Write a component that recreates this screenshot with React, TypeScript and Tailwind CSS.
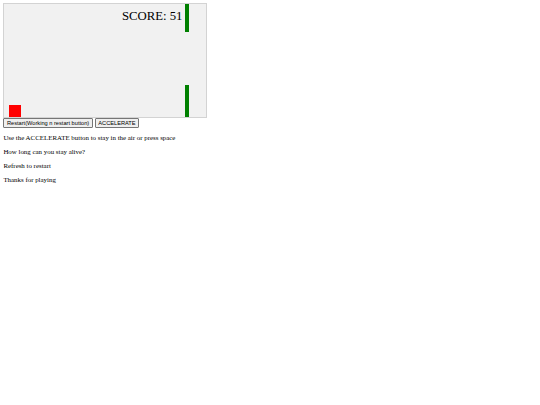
export default function App() {
  return (
    <div className="min-h-screen bg-white p-[3.4px] font-['Liberation_Serif',serif] text-[6.9px] leading-[1.1] text-black">
      <div className="relative h-[115px] w-[204px] border-[0.425px] border-[#d3d3d3] bg-[#f1f1f1]">
        <div className="absolute left-[117.5px] top-[6px] whitespace-nowrap text-[12.75px] leading-none">SCORE: 51</div>
        <div className="absolute left-[180.5px] top-0 h-[28px] w-[4.25px] bg-[#008000]" />
        <div className="absolute bottom-0 left-[180.5px] h-[32px] w-[4.25px] bg-[#008000]" />
        <div className="absolute bottom-0 left-[4.25px] h-[12.75px] w-[12.75px] bg-[#ff0000]" />
      </div>
      <div className="flex gap-[2px] font-['Liberation_Sans',Arial,sans-serif] text-[5.67px] leading-[1.15]">
        <button type="button" className="rounded-[1px] border-[0.85px] border-[#767676] bg-[#efefef] px-[2.55px] py-[0.425px]">
          Restart(Working n restart button)
        </button>
        <button type="button" className="rounded-[1px] border-[0.85px] border-[#767676] bg-[#efefef] px-[2.55px] py-[0.425px]">
          ACCELERATE
        </button>
      </div>
      <div className="mt-[6px] flex flex-col gap-[6.5px]">
        <p>Use the ACCELERATE button to stay in the air or press space</p>
        <p>How long can you stay alive?</p>
        <p>Refresh to restart</p>
        <p>Thanks for playing</p>
      </div>
    </div>
  );
}
